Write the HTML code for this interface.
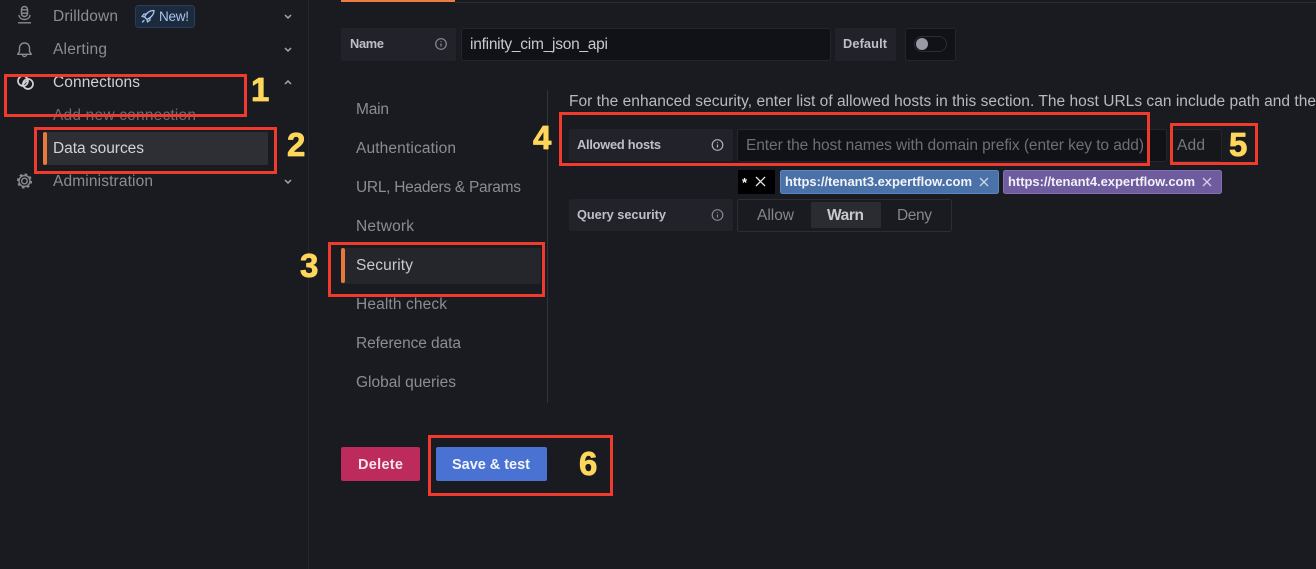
<!DOCTYPE html>
<html><head><meta charset="utf-8"><style>
html,body{margin:0;padding:0;background:#1a1b20;width:1316px;height:569px;overflow:hidden}
svg{display:block}
text{font-family:"Liberation Sans",sans-serif;font-size:15.5px}
.n{fill:#8c8d94}.l{fill:#c8c9d0}.b{font-weight:bold;font-size:12.8px;fill:#bfc0c7}
.y{fill:#fdd65b;font-weight:bold;font-size:33px;stroke:#fdd65b;stroke-width:.8px;stroke-linejoin:round}
.r{fill:none;stroke:#f03a2e;stroke-width:3}
.ic{fill:none;stroke:#8a8b92;stroke-width:1.4;stroke-linecap:round;stroke-linejoin:round}
</style></head><body>
<svg width="1316" height="569" viewBox="0 0 1316 569" xmlns="http://www.w3.org/2000/svg">
<rect width="1316" height="569" fill="#1a1b20"/>
<rect x="308" y="0" width="1" height="569" fill="#26272c"/>

<!-- sidebar -->
<g class="ic">
<rect x="21.500" y="6.500" width="6" height="10" rx="3"/>
<path d="M21.500 9.800h6M21.500 13.200h6M19 15.500c.5 2.500 2.800 4 5.500 4s5-1.500 5.500-4M18.500 22.800h12"/>
<path d="M24.500 43c-3 0-5 2.200-5 5v3.500l-1.800 2.800h13.600l-1.800-2.800v-3.500c0-2.800-2-5-5-5zM22.500 54.500a2 2 0 0 0 4 0"/>
<circle cx="24.500" cy="181" r="2.800"/>
<circle cx="24.500" cy="181" r="5.500"/>
<circle cx="24.500" cy="181" r="6.800" stroke-dasharray="2.670 2.670" stroke-linecap="butt" stroke-width="1.600"/>
</g>
<g fill="none" stroke="#d0d1d6" stroke-width="1.700">
<circle cx="28" cy="84" r="5"/><circle cx="23" cy="81" r="5"/>
<path d="M22 85l6-5"/>
</g>
<text x="53" y="21" class="n" textLength="65" lengthAdjust="spacing">Drilldown</text>
<rect x="135.500" y="5.500" width="59" height="22" rx="3" fill="#1c2a3d" stroke="#2a3d5a"/>
<path d="M154 10.500c-4 0-7.500 2-9.500 6.500l2.500 2.500c4.500-2 7-5.500 7-9zM144.500 17l-2.500-.5 2-2.500h2.500M147 19.500l.5 2.500 2.500-2v-2.500M142.500 22l1.500-1.500" fill="none" stroke="#a8c4ee" stroke-width="1.300" stroke-linejoin="round" stroke-linecap="round"/>
<text x="159" y="21" fill="#a8c4ee" style="font-size:13.500px" textLength="30" lengthAdjust="spacing">New!</text>
<text x="53" y="54" class="n" textLength="54" lengthAdjust="spacing">Alerting</text>
<text x="53" y="87" fill="#cfd0d6" textLength="87" lengthAdjust="spacing">Connections</text>
<text x="53" y="120" fill="#6c6d73" textLength="143" lengthAdjust="spacing">Add new connection</text>
<rect x="43" y="132" width="225" height="33" rx="2" fill="#2e2f35"/>
<rect x="43" y="132" width="4" height="33" rx="2" fill="#e8793a"/>
<text x="53" y="153" fill="#d2d3d9" textLength="91" lengthAdjust="spacing">Data sources</text>
<text x="53" y="186" class="n" textLength="100" lengthAdjust="spacing">Administration</text>
<g fill="none" stroke="#a5a6ac" stroke-width="1.500">
<path d="M285 15l3 3 3-3M285 48l3 3 3-3M285 180l3 3 3-3M285 84l3-3 3 3"/>
</g>

<!-- tab -->
<rect x="455" y="2" width="861" height="1" fill="#2b2c31"/>
<rect x="341" y="0" width="114" height="2" fill="#ee7b40"/>

<!-- name row -->
<rect x="341" y="28" width="115" height="33" rx="2" fill="#22232a"/>
<text x="350" y="48" class="b" textLength="34" lengthAdjust="spacing">Name</text>
<g fill="none" stroke="#8a8b92" stroke-width="1.200"><circle cx="441" cy="44" r="5.300"/><path d="M441 43.500v3M441 41.300v.8"/></g>
<rect x="461.500" y="28.500" width="369" height="32" rx="2" fill="#111217" stroke="#25262c"/>
<text x="470" y="49" fill="#c8c9d0" textLength="138" lengthAdjust="spacing">infinity_cim_json_api</text>
<rect x="835" y="28" width="61" height="33" rx="2" fill="#22232a"/>
<text x="843" y="48" class="b" textLength="44" lengthAdjust="spacing">Default</text>
<rect x="905.500" y="28.500" width="50" height="32" rx="2" fill="#111217" stroke="#25262c"/>
<rect x="914.500" y="36.500" width="32" height="15" rx="7.500" fill="#111217" stroke="#2c2d33"/>
<circle cx="922" cy="44" r="6" fill="#9a9aa4"/>

<!-- side nav -->
<text x="356" y="114" class="n" textLength="33" lengthAdjust="spacing">Main</text>
<text x="356" y="153" class="n" textLength="100" lengthAdjust="spacing">Authentication</text>
<text x="356" y="192" class="n" textLength="165" lengthAdjust="spacing">URL, Headers &amp; Params</text>
<text x="356" y="231" class="n" textLength="58" lengthAdjust="spacing">Network</text>
<rect x="341" y="248" width="200" height="36" rx="2" fill="#25262c"/>
<rect x="341" y="248" width="4" height="35" rx="2" fill="#e8793a"/>
<text x="356" y="270" fill="#c8c9d0" textLength="57" lengthAdjust="spacing">Security</text>
<text x="356" y="309" class="n" textLength="91" lengthAdjust="spacing">Health check</text>
<text x="356" y="348" class="n" textLength="105" lengthAdjust="spacing">Reference data</text>
<text x="356" y="387" class="n" textLength="100" lengthAdjust="spacing">Global queries</text>
<rect x="547" y="90" width="1" height="313" fill="#33343a"/>

<!-- security -->
<text x="569" y="106" fill="#b9bac0" textLength="747" lengthAdjust="spacing">For the enhanced security, enter list of allowed hosts in this section. The host URLs can include path and the</text>
<rect x="569" y="129" width="164" height="32" rx="2" fill="#22232a"/>
<text x="577" y="149" class="b" textLength="84" lengthAdjust="spacing">Allowed hosts</text>
<g fill="none" stroke="#b0b1b7" stroke-width="1.200"><circle cx="717.500" cy="145" r="5.300"/><path d="M717.500 144.500v3M717.500 142.300v.8"/></g>
<rect x="737.500" y="129.500" width="429" height="32" rx="2" fill="#111217" stroke="#25262c"/>
<text x="746" y="150" fill="#6e6f75" textLength="398" lengthAdjust="spacing">Enter the host names with domain prefix (enter key to add)</text>
<rect x="1170.500" y="129.500" width="51" height="32" rx="2" fill="#16171b" stroke="#25262c"/>
<text x="1177" y="150" fill="#77787e" textLength="28" lengthAdjust="spacing">Add</text>

<rect x="738" y="170" width="37" height="24" rx="1" fill="#000"/>
<text x="742" y="187" fill="#fff" style="font-size:13px;font-weight:bold">*</text>
<path d="M756 177l9 9M765 177l-9 9" stroke="#e8e8e8" stroke-width="1.300" fill="none"/>
<rect x="780.500" y="170.500" width="218" height="23" rx="2" fill="#4a72a8" stroke="#5d87c0"/>
<text x="785" y="186" fill="#f2f4f8" style="font-size:13px;font-weight:bold" textLength="187" lengthAdjust="spacing">https://tenant3.expertflow.com</text>
<path d="M980 178l8 8M988 178l-8 8" stroke="#cdd6e4" stroke-width="1.300" fill="none"/>
<rect x="1003.500" y="170.500" width="218" height="23" rx="2" fill="#6e5c9e" stroke="#8270b4"/>
<text x="1008" y="186" fill="#f2f0f8" style="font-size:13px;font-weight:bold" textLength="187" lengthAdjust="spacing">https://tenant4.expertflow.com</text>
<path d="M1203 178l8 8M1211 178l-8 8" stroke="#d4cfe4" stroke-width="1.300" fill="none"/>

<rect x="569" y="199" width="164" height="32" rx="2" fill="#22232a"/>
<text x="577" y="219" class="b" textLength="89" lengthAdjust="spacing">Query security</text>
<g fill="none" stroke="#85868c" stroke-width="1.200"><circle cx="717.500" cy="215" r="5.300"/><path d="M717.500 214.500v3M717.500 212.300v.8"/></g>
<rect x="737.500" y="199.500" width="214" height="32" rx="2" fill="none" stroke="#2d2e34"/>
<rect x="811" y="202" width="70" height="26" rx="1" fill="#2b2c32"/>
<text x="757" y="220" fill="#85868c" textLength="37" lengthAdjust="spacing">Allow</text>
<text x="827" y="220" fill="#c8c9d0" style="font-weight:bold" textLength="37" lengthAdjust="spacing">Warn</text>
<text x="897" y="220" fill="#85868c" textLength="35" lengthAdjust="spacing">Deny</text>

<!-- buttons -->
<rect x="341" y="447" width="79" height="34" rx="2" fill="#bd2a5c"/>
<text x="358" y="469" fill="#f6e6ec" style="font-weight:bold;font-size:14.500px" textLength="45" lengthAdjust="spacing">Delete</text>
<rect x="436" y="447" width="111" height="34" rx="2" fill="#4a72d2"/>
<text x="452" y="469" fill="#f2f4fb" style="font-weight:bold;font-size:14.500px" textLength="78" lengthAdjust="spacing">Save &amp; test</text>

<!-- annotations -->
<rect class="r" x="5.500" y="75.500" width="240" height="40"/>
<rect class="r" x="35.500" y="128.500" width="240" height="44"/>
<rect class="r" x="329.500" y="243.500" width="214" height="52"/>
<rect class="r" x="560.500" y="113.500" width="588" height="51"/>
<rect class="r" x="1171.500" y="124.500" width="85" height="39"/>
<rect class="r" x="429.500" y="436.500" width="182" height="58"/>
<text x="251" y="101" class="y">1</text>
<text x="287" y="156" class="y">2</text>
<text x="300" y="277" class="y">3</text>
<text x="533" y="149" class="y">4</text>
<text x="1229" y="156" class="y">5</text>
<text x="579" y="475" class="y">6</text>
</svg>
</body></html>
